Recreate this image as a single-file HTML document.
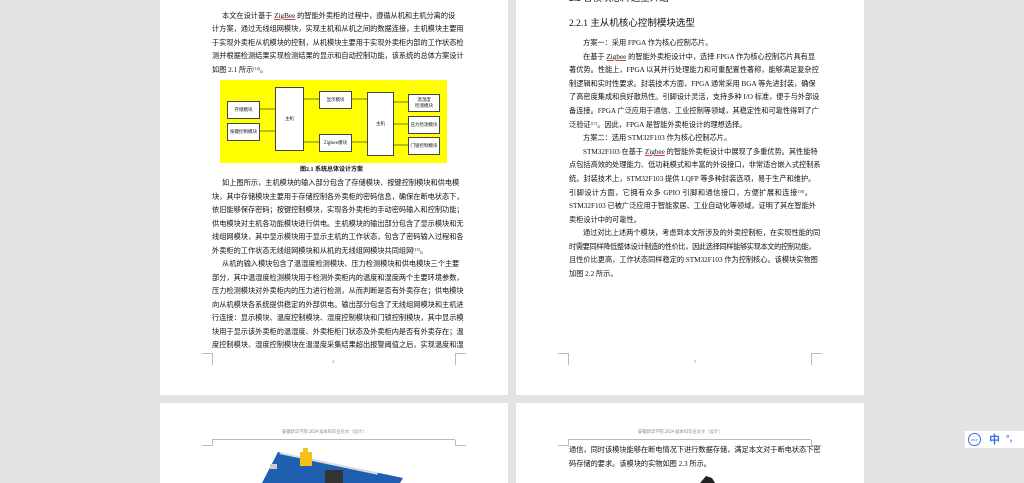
<!DOCTYPE html>
<html><head><meta charset="utf-8">
<style>
html,body{margin:0;padding:0}
body{width:1024px;height:483px;background:#e3e3e3;position:relative;overflow:hidden;font-family:"Liberation Serif","Noto Sans CJK SC",serif;color:#111}
.pg{position:absolute;background:#fff}
.l{position:absolute;font-size:7.2px;line-height:9px;white-space:nowrap;text-align:justify;text-align-last:justify}
.n{text-align-last:auto}
.u{text-decoration:underline;text-decoration-color:#e33;}
sup{font-size:4px;vertical-align:2px;line-height:0}
.cm{position:absolute;border-color:#bbb;border-style:solid;border-width:0}
.bx{position:absolute;background:#fff;border:1px solid #444;font-size:4.5px;display:flex;align-items:center;justify-content:center;text-align:center;line-height:6px;font-family:"Noto Sans CJK SC",sans-serif}
</style></head><body>
<div class="pg" style="left:160px;top:0;width:348px;height:395px"></div>
<div class="pg" style="left:516px;top:0;width:348px;height:395px"></div>
<div class="pg" style="left:160px;top:403px;width:348px;height:80px"></div>
<div class="pg" style="left:516px;top:403px;width:348px;height:80px"></div>

<div class="l" style="left:222px;top:12px;width:233px">本文在设计基于 <span class="u">ZigBee</span> 的智能外卖柜的过程中，遵循从机和主机分离的设</div>
<div class="l" style="left:212px;top:25px;width:243px">计方案，通过无线组网模块，实现主机和从机之间的数据连接，主机模块主要用</div>
<div class="l" style="left:212px;top:39px;width:243px">于实现外卖柜从机模块的控制，从机模块主要用于实现外卖柜内部的工作状态检</div>
<div class="l" style="left:212px;top:52px;width:243px">测并根据检测结果实现检测结果的显示和自动控制功能，该系统的总体方案设计</div>
<div class="l n" style="left:212px;top:66px">如图 2.1 所示<sup>[14]</sup>。</div>

<div style="position:absolute;left:220px;top:80px;width:227px;height:83px;background:#ffff00"></div>
<div class="bx" style="left:227px;top:101px;width:31px;height:16px">存储模块</div>
<div class="bx" style="left:227px;top:123px;width:31px;height:16px">按键控制模块</div>
<div class="bx" style="left:275px;top:87px;width:27px;height:62px">主机</div>
<div class="bx" style="left:319px;top:91px;width:31px;height:16px">显示模块</div>
<div class="bx" style="left:319px;top:134px;width:31px;height:16px">Zigbee模块</div>
<div class="bx" style="left:367px;top:92px;width:25px;height:62px">主机</div>
<div class="bx" style="left:408px;top:94px;width:30px;height:16px">温湿度<br>检测模块</div>
<div class="bx" style="left:408px;top:116px;width:30px;height:16px">压力检测模块</div>
<div class="bx" style="left:408px;top:137px;width:30px;height:16px">门锁控制模块</div>
<svg style="position:absolute;left:0;top:0" width="1024" height="483">
<g stroke="#222" stroke-width=".6" fill="#222">
<line x1="260" y1="109" x2="275" y2="109"/><line x1="260" y1="131" x2="275" y2="131"/>
<line x1="303" y1="99" x2="319" y2="99"/><line x1="303" y1="142" x2="319" y2="142"/>
<line x1="352" y1="99" x2="367" y2="99"/><line x1="352" y1="142" x2="367" y2="142"/>
<line x1="393" y1="102" x2="408" y2="102"/><line x1="393" y1="124" x2="408" y2="124"/><line x1="393" y1="145" x2="408" y2="145"/>
</g></svg>
<div class="l n" style="left:300px;top:166px;font-weight:bold;font-size:6px">图2.1  系统总体设计方案</div>

<div class="l" style="left:222px;top:179px;width:233px">如上图所示，主机模块的输入部分包含了存储模块、按键控制模块和供电模</div>
<div class="l" style="left:212px;top:193px;width:243px">块，其中存储模块主要用于存储控制各外卖柜的密码信息，确保在断电状态下，</div>
<div class="l" style="left:212px;top:206px;width:243px">依旧能够保存密码；按键控制模块，实现各外卖柜的手动密码输入和控制功能；</div>
<div class="l" style="left:212px;top:220px;width:243px">供电模块对主机各功能模块进行供电。主机模块的输出部分包含了显示模块和无</div>
<div class="l" style="left:212px;top:233px;width:243px">线组网模块，其中显示模块用于显示主机的工作状态，包含了密码输入过程和各</div>
<div class="l n" style="left:212px;top:247px">外卖柜的工作状态无线组网模块和从机的无线组网模块共同组网<sup>[15]</sup>。</div>
<div class="l" style="left:222px;top:260px;width:233px">从机的输入模块包含了温湿度检测模块、压力检测模块和供电模块三个主要</div>
<div class="l" style="left:212px;top:274px;width:243px">部分，其中温湿度检测模块用于检测外卖柜内的温度和湿度两个主要环境参数，</div>
<div class="l" style="left:212px;top:287px;width:243px">压力检测模块对外卖柜内的压力进行检测，从而判断是否有外卖存在；供电模块</div>
<div class="l" style="left:212px;top:301px;width:243px">向从机模块各系统提供稳定的外部供电。输出部分包含了无线组网模块和主机进</div>
<div class="l" style="left:212px;top:314px;width:243px">行连接：显示模块、温度控制模块、湿度控制模块和门锁控制模块，其中显示模</div>
<div class="l" style="left:212px;top:328px;width:243px">块用于显示该外卖柜的温湿度、外卖柜柜门状态及外卖柜内是否有外卖存在；温</div>
<div class="l" style="left:212px;top:341px;width:243px">度控制模块、湿度控制模块在温湿度采集结果超出报警阈值之后，实现温度和湿</div>

<div class="cm" style="left:202px;top:353px;width:10px;height:11px;border-top-width:1px;border-right-width:1px"></div>
<div class="cm" style="left:455px;top:353px;width:10px;height:11px;border-top-width:1px;border-left-width:1px"></div>
<div class="l n" style="left:332px;top:357px;font-size:4px;color:#777">4</div>

<div class="l n" style="left:569px;top:-5px;font-size:9.5px">2.2  各模块芯片选型介绍</div>
<div class="l n" style="left:569px;top:19px;font-size:9.5px;line-height:11px">2.2.1  主从机核心控制模块选型</div>
<div class="l n" style="left:583px;top:39px">方案一：采用 FPGA 作为核心控制芯片。</div>
<div class="l" style="left:583px;top:53px;width:229px">在基于 <span class="u">Zigbee</span> 的智能外卖柜设计中，选择 FPGA 作为核心控制芯片具有显</div>
<div class="l" style="left:569px;top:66px;width:243px">著优势。性能上，FPGA 以其并行处理能力和可重配置性著称，能够满足复杂控</div>
<div class="l" style="left:569px;top:80px;width:243px">制逻辑和实时性要求。封装技术方面，FPGA 通常采用 BGA 等先进封装，确保</div>
<div class="l" style="left:569px;top:93px;width:243px">了高密度集成和良好散热性。引脚设计灵活，支持多种 I/O 标准，便于与外部设</div>
<div class="l" style="left:569px;top:107px;width:243px">备连接。FPGA 广泛应用于通信、工业控制等领域，其稳定性和可靠性得到了广</div>
<div class="l n" style="left:569px;top:121px">泛验证<sup>[17]</sup>。因此，FPGA 是智能外卖柜设计的理想选择。</div>
<div class="l n" style="left:583px;top:134px">方案二：选用 STM32F103 作为核心控制芯片。</div>
<div class="l" style="left:583px;top:148px;width:229px">STM32F103 在基于 <span class="u">Zigbee</span> 的智能外卖柜设计中展现了多重优势。其性能特</div>
<div class="l" style="left:569px;top:161px;width:243px">点包括高效的处理能力、低功耗模式和丰富的外设接口，非常适合嵌入式控制系</div>
<div class="l" style="left:569px;top:175px;width:243px">统。封装技术上，STM32F103 提供 LQFP 等多种封装选项，易于生产和维护。</div>
<div class="l" style="left:569px;top:189px;width:243px">引脚设计方面，它拥有众多 GPIO 引脚和通信接口，方便扩展和连接<sup>[18]</sup>。</div>
<div class="l" style="left:569px;top:202px;width:243px">STM32F103 已被广泛应用于智能家居、工业自动化等领域，证明了其在智能外</div>
<div class="l n" style="left:569px;top:216px">卖柜设计中的可靠性。</div>
<div class="l" style="left:583px;top:229px;width:229px">通过对比上述两个模块，考虑到本文所涉及的外卖控制柜，在实现性能的同</div>
<div class="l" style="left:569px;top:243px;width:243px;letter-spacing:-0.35px">时需要同样降低整体设计制造的性价比，因此选择同样能够实现本文的控制功能，</div>
<div class="l" style="left:569px;top:256px;width:243px">且性价比更高，工作状态同样稳定的 STM32F103 作为控制核心。该模块实物图</div>
<div class="l n" style="left:569px;top:270px">加图 2.2 所示。</div>
<div class="cm" style="left:558px;top:353px;width:10px;height:11px;border-top-width:1px;border-right-width:1px"></div>
<div class="cm" style="left:811px;top:353px;width:10px;height:11px;border-top-width:1px;border-left-width:1px"></div>
<div class="l n" style="left:694px;top:357px;font-size:4px;color:#777">5</div>

<div class="l n" style="left:282px;top:428px;font-size:4.3px;color:#888;font-family:'Noto Sans CJK SC',sans-serif">安徽新华学院 2024 届本科毕业论文（设计）</div>
<div style="position:absolute;left:212px;top:439px;width:243px;height:1px;background:#bbb"></div>
<div class="cm" style="left:202px;top:440px;width:10px;height:5px;border-bottom-width:1px;border-right-width:1px"></div>
<div class="cm" style="left:455px;top:440px;width:10px;height:5px;border-bottom-width:1px;border-left-width:1px"></div>
<div class="l n" style="left:638px;top:428px;font-size:4.3px;color:#888;font-family:'Noto Sans CJK SC',sans-serif">安徽新华学院 2024 届本科毕业论文（设计）</div>
<div style="position:absolute;left:568px;top:439px;width:243px;height:1px;background:#bbb"></div>
<div class="cm" style="left:558px;top:440px;width:10px;height:5px;border-bottom-width:1px;border-right-width:1px"></div>
<div class="cm" style="left:811px;top:440px;width:10px;height:5px;border-bottom-width:1px;border-left-width:1px"></div>
<div class="l" style="left:569px;top:446px;width:243px">通信，同时该模块能够在断电情况下进行数据存储，满足本文对于断电状态下密</div>
<div class="l n" style="left:569px;top:460px">码存储的要求。该模块的实物如图 2.3 所示。</div>
<svg style="position:absolute;left:0;top:0" width="1024" height="483">
<polygon points="278,452 403,478 400,483 262,483" fill="#1f5fb0"/>
<g fill="#ddd"><rect x="280" y="452" width="100" height="2" transform="rotate(12 280 452)"/></g>
<rect x="300" y="452" width="12" height="14" fill="#f3c21a"/>
<rect x="303" y="448" width="5" height="5" fill="#f3c21a"/>
<rect x="270" y="464" width="7" height="5" fill="#ccc"/>
<rect x="325" y="470" width="18" height="13" fill="#333"/>
<path d="M700 483 L706 476 L712 478 L715 483Z" fill="#222"/>
</svg>

<div style="position:absolute;left:965px;top:431px;width:59px;height:17px;background:#fff"></div>
<div style="position:absolute;left:968px;top:433px;width:11px;height:11px;border:1px solid #3b6ee8;border-radius:50%;font:bold 3px 'Liberation Sans',sans-serif;color:#3b6ee8;display:flex;align-items:center;justify-content:center">iFLY</div>
<div style="position:absolute;left:989px;top:432px;font:bold 11px 'Noto Sans CJK SC',sans-serif;color:#3b6ee8;line-height:14px">中</div>
<div style="position:absolute;left:1006px;top:431px;font:bold 9px 'Liberation Sans',sans-serif;color:#3b6ee8;line-height:14px">°,</div>
</body></html>
